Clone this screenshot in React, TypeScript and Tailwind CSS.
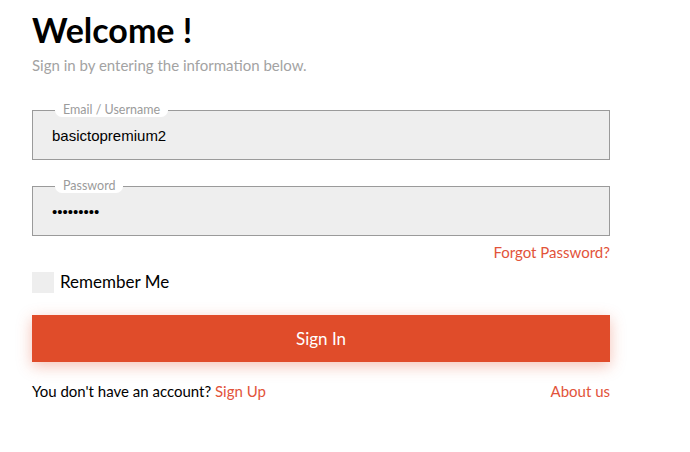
import React from "react";

export default function App() {
  const font = { fontFamily: "'Lato', 'Noto Sans', sans-serif" };
  return (
    <div className="min-h-[452px] w-[690px] bg-white" style={font}>
      <div className="ml-8 w-[578px] pt-[10px]">
        <h1 className="text-[34px] leading-[40px] font-bold text-black">Welcome !</h1>
        <p className="mt-[5px] text-[15px] leading-[20px] text-[#a3a3a3]">
          Sign in by entering the information below.
        </p>

        <fieldset className="mt-[28px] h-[57px] border border-[#9a9a9a] bg-[#eeeeee] px-[19px] pb-[6px]">
          <legend className="ml-[3px] rounded-full bg-white px-[8px] text-[12.5px] leading-[14px] text-[#9b9b9b]">
            Email / Username
          </legend>
          <div
            className="pt-[10px] text-[15px] leading-[18px] text-black"
            style={{ fontFamily: "'Liberation Sans', Arial, sans-serif" }}
          >
            basictopremium2
          </div>
        </fieldset>

        <fieldset className="mt-[19px] h-[57px] border border-[#9a9a9a] bg-[#eeeeee] px-[19px] pb-[6px]">
          <legend className="ml-[3px] rounded-full bg-white px-[8px] text-[12.5px] leading-[14px] text-[#9b9b9b]">
            Password
          </legend>
          <div
            className="pt-[10px] text-[15px] leading-[18px] text-black"
            style={{ fontFamily: "'Liberation Sans', Arial, sans-serif" }}
          >
            •••••••••
          </div>
        </fieldset>

        <div className="mt-[6px] flex justify-end">
          <a className="text-[15px] leading-[20px] text-[#e2533a]">Forgot Password?</a>
        </div>

        <label className="mt-[9px] flex items-center gap-[6px]">
          <span className="h-[21px] w-[22px] bg-[#eeeeee]" />
          <span className="text-[17px] leading-[22px] text-black">Remember Me</span>
        </label>

        <button
          className="mt-[22px] flex h-[47px] w-full items-center justify-center bg-[#e04c2a] text-[17px] text-white"
          style={{ boxShadow: "0 4px 14px rgba(224,76,42,0.35)" }}
        >
          Sign In
        </button>

        <div className="mt-[19px] flex items-center justify-between text-[15px] leading-[20px]">
          <span className="text-black">
            You don't have an account? <a className="text-[#e2533a]">Sign Up</a>
          </span>
          <a className="text-[#e2533a]">About us</a>
        </div>
      </div>
    </div>
  );
}
